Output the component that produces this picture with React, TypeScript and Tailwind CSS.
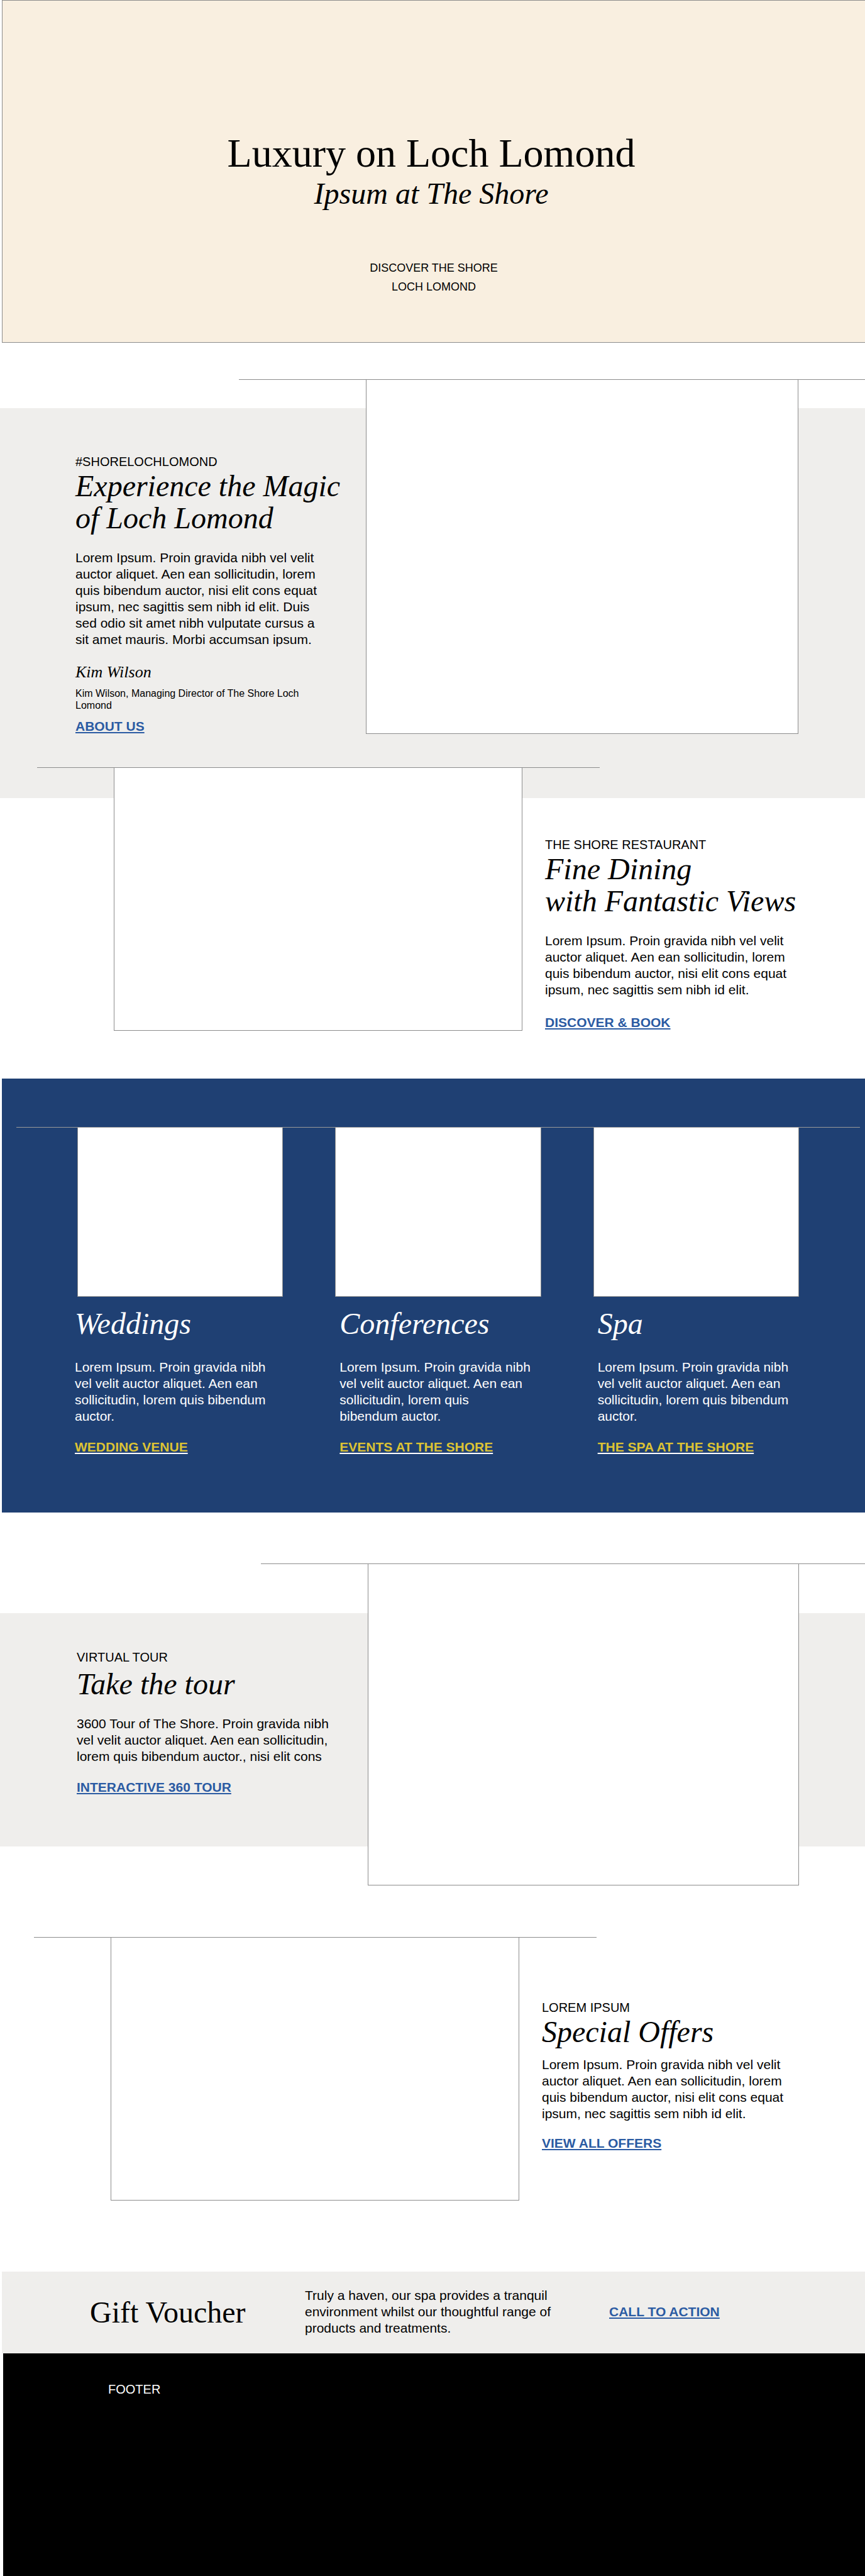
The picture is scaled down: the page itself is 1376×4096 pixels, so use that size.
import type { ReactNode } from "react";

function Eyebrow({ children }: { children: ReactNode }) {
  return <p className="text-[20px] leading-[26px]">{children}</p>;
}

function Title({ children, className = "" }: { children: ReactNode; className?: string }) {
  return (
    <h2 className={`font-['Liberation_Serif',serif] text-[48px] leading-[51px] whitespace-nowrap italic ${className}`}>
      {children}
    </h2>
  );
}

function Body({ children, className = "" }: { children: ReactNode; className?: string }) {
  return <p className={`text-[21px] leading-[26px] ${className}`}>{children}</p>;
}

function Action({ children, className = "text-[#2b5ba3]" }: { children: ReactNode; className?: string }) {
  return (
    <a
      href="#"
      className={`block w-fit text-[21px] leading-[26px] font-bold whitespace-nowrap underline decoration-2 underline-offset-2 ${className}`}
    >
      {children}
    </a>
  );
}

function Picture({ className = "" }: { className?: string }) {
  return <figure className={`border border-t-0 border-[#8c8c8c] bg-white ${className}`} />;
}

const services = [
  {
    name: "Weddings",
    text: "Lorem Ipsum. Proin gravida nibh vel velit auctor aliquet. Aen ean sollicitudin, lorem quis bibendum auctor.",
    action: "WEDDING VENUE",
    inset: "-ml-1",
  },
  {
    name: "Conferences",
    text: (
      <>
        Lorem Ipsum. Proin gravida nibh vel velit auctor aliquet. Aen ean sollicitudin, lorem quis
        <br />
        bibendum auctor.
      </>
    ),
    action: "EVENTS AT THE SHORE",
    inset: "ml-[7px]",
  },
  {
    name: "Spa",
    text: "Lorem Ipsum. Proin gravida nibh vel velit auctor aliquet. Aen ean sollicitudin, lorem quis bibendum auctor.",
    action: "THE SPA AT THE SHORE",
    inset: "ml-[7px]",
  },
];

export default function App() {
  return (
    <div className="overflow-x-hidden bg-white font-['Liberation_Sans',Arial,sans-serif] text-black">
      <header className="ml-[3px] border border-r-0 border-[#8c8c8c] bg-[#f9efe0] pt-[207px] pb-[73px] text-center">
        <div className="pr-2 font-['Liberation_Serif',serif]">
          <h1 className="text-[64px] leading-[72px]">Luxury on Loch Lomond</h1>
          <p className="mt-[2px] text-[48px] leading-[51px] italic">Ipsum at The Shore</p>
        </div>
        <p className="mt-[78px] text-[18px] leading-[30px]">
          DISCOVER THE SHORE
          <br />
          LOCH LOMOND
        </p>
      </header>

      <main>
        <section className="pt-[58px]">
          <hr className="ml-[380px] border-[#8c8c8c]" />
          <div className="mt-[45px] flex items-start bg-[#efeeec]">
            <div className="w-[582px] shrink-0 pt-[72px] pl-[120px]">
              <Eyebrow>#SHORELOCHLOMOND</Eyebrow>
              <Title>
                Experience the Magic
                <br />
                of Loch Lomond
              </Title>
              <Body className="mt-[25px] w-[400px]">
                Lorem Ipsum. Proin gravida nibh vel velit auctor aliquet. Aen ean sollicitudin, lorem quis bibendum
                auctor, nisi elit cons equat ipsum, nec sagittis sem nibh id elit. Duis sed odio sit amet nibh vulputate
                cursus a sit amet mauris. Morbi accumsan ipsum.
              </Body>
              <p className="mt-[23px] font-['Liberation_Serif',serif] text-[26px] leading-[32px] italic">Kim Wilson</p>
              <p className="mt-2 w-[400px] text-[16px] leading-[19px]">
                Kim Wilson, Managing Director of The Shore Loch Lomond
              </p>
              <Action className="mt-[11px] text-[#2b5ba3]">ABOUT US</Action>
            </div>
            <Picture className="-mt-[45px] mr-[106px] mb-[102px] h-[563px] flex-1" />
          </div>
        </section>

        <section className="relative -mt-[49px]">
          <hr className="mr-[422px] ml-[59px] border-[#8c8c8c]" />
          <div className="flex items-start">
            <Picture className="ml-[181px] h-[418px] flex-1" />
            <div className="w-[545px] shrink-0 pt-[109px] pl-[36px]">
              <Eyebrow>THE SHORE RESTAURANT</Eyebrow>
              <Title>
                Fine Dining
                <br />
                with Fantastic Views
              </Title>
              <Body className="mt-[25px] w-[400px]">
                Lorem Ipsum. Proin gravida nibh vel velit auctor aliquet. Aen ean sollicitudin, lorem quis bibendum
                auctor, nisi elit cons equat ipsum, nec sagittis sem nibh id elit.
              </Body>
              <Action className="mt-[26px] text-[#2b5ba3]">DISCOVER &amp; BOOK</Action>
            </div>
          </div>
        </section>

        <section className="mt-[76px] ml-[3px] bg-[#1f4073] pt-[77px] pb-[91px] text-white">
          <hr className="mr-2 ml-[23px] border-[#999999]" />
          <div className="mr-[105px] ml-[120px] grid grid-cols-3 gap-[83px]">
            {services.map((service) => (
              <article key={service.name}>
                <Picture className="h-[269px]" />
                <div className={service.inset}>
                  <Title className="mt-[17px]">{service.name}</Title>
                  <Body className="mt-[31px] w-[320px]">{service.text}</Body>
                  <Action className="mt-[23px] text-[#dcc334] decoration-white">{service.action}</Action>
                </div>
              </article>
            ))}
          </div>
        </section>

        <section className="pt-[81px]">
          <hr className="ml-[415px] border-[#8c8c8c]" />
          <div className="mt-[78px] flex items-start bg-[#efeeec]">
            <div className="w-[585px] shrink-0 pt-[57px] pl-[122px]">
              <Eyebrow>VIRTUAL TOUR</Eyebrow>
              <Title className="mt-1">Take the tour</Title>
              <Body className="mt-[25px] w-[420px]">
                3600 Tour of The Shore. Proin gravida nibh vel velit auctor aliquet. Aen ean sollicitudin, lorem quis
                bibendum auctor., nisi elit cons
              </Body>
              <Action className="mt-[23px] text-[#2b5ba3]">INTERACTIVE 360 TOUR</Action>
            </div>
            <Picture className="-mt-[78px] mr-[105px] -mb-[62px] h-[511px] flex-1" />
          </div>
        </section>

        <section className="pt-[144px]">
          <hr className="mr-[427px] ml-[54px] border-[#8c8c8c]" />
          <div className="flex items-start">
            <Picture className="ml-[176px] h-[418px] flex-1" />
            <div className="w-[550px] shrink-0 pt-[98px] pl-[36px]">
              <Eyebrow>LOREM IPSUM</Eyebrow>
              <Title>Special Offers</Title>
              <Body className="mt-[14px] w-[400px]">
                Lorem Ipsum. Proin gravida nibh vel velit auctor aliquet. Aen ean sollicitudin, lorem quis bibendum
                auctor, nisi elit cons equat ipsum, nec sagittis sem nibh id elit.
              </Body>
              <Action className="mt-[21px] text-[#2b5ba3]">VIEW ALL OFFERS</Action>
            </div>
          </div>
        </section>

        <section className="mt-[113px] ml-[3px] flex items-center bg-[#efeeec] pt-[25px] pb-[27px] pl-[140px]">
          <h2 className="w-[342px] font-['Liberation_Serif',serif] text-[48px] leading-[51px]">Gift Voucher</h2>
          <Body className="mr-[74px] w-[410px]">
            Truly a haven, our spa provides a tranquil environment whilst our thoughtful range of products and
            treatments.
          </Body>
          <Action>CALL TO ACTION</Action>
        </section>
      </main>

      <footer className="ml-[5px] min-h-[354px] bg-black pt-[44px] pl-[167px] text-white">
        <Eyebrow>FOOTER</Eyebrow>
      </footer>
    </div>
  );
}
